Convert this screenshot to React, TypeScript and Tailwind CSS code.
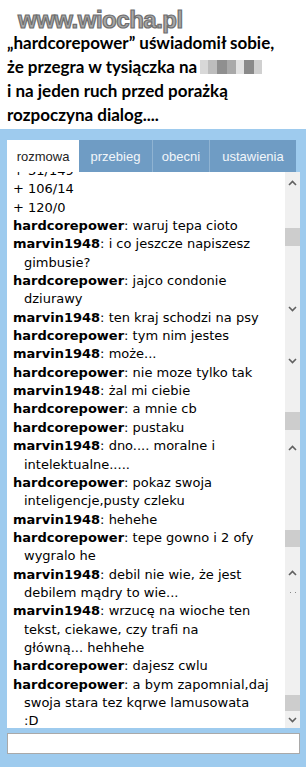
import React from 'react';

type Line = { who?: string; text: string; cont?: boolean };

const lines: Line[] = [
  { text: '+ 31/149' },
  { text: '+ 106/14' },
  { text: '+ 120/0' },
  { who: 'hardcorepower', text: 'waruj tepa cioto' },
  { who: 'marvin1948', text: 'i co jeszcze napiszesz' },
  { cont: true, text: 'gimbusie?' },
  { who: 'hardcorepower', text: 'jajco condonie' },
  { cont: true, text: 'dziurawy' },
  { who: 'marvin1948', text: 'ten kraj schodzi na psy' },
  { who: 'hardcorepower', text: 'tym nim jestes' },
  { who: 'marvin1948', text: 'może...' },
  { who: 'hardcorepower', text: 'nie moze tylko tak' },
  { who: 'marvin1948', text: 'żal mi ciebie' },
  { who: 'hardcorepower', text: 'a mnie cb' },
  { who: 'hardcorepower', text: 'pustaku' },
  { who: 'marvin1948', text: 'dno.... moralne i' },
  { cont: true, text: 'intelektualne.....' },
  { who: 'hardcorepower', text: 'pokaz swoja' },
  { cont: true, text: 'inteligencje,pusty czleku' },
  { who: 'marvin1948', text: 'hehehe' },
  { who: 'hardcorepower', text: 'tepe gowno i 2 ofy' },
  { cont: true, text: 'wygralo he' },
  { who: 'marvin1948', text: 'debil nie wie, że jest' },
  { cont: true, text: 'debilem mądry to wie...' },
  { who: 'marvin1948', text: 'wrzucę na wioche ten' },
  { cont: true, text: 'tekst, ciekawe, czy trafi na' },
  { cont: true, text: 'główną... hehhehe' },
  { who: 'hardcorepower', text: 'dajesz cwlu' },
  { who: 'hardcorepower', text: 'a bym zapomnial,daj' },
  { cont: true, text: 'swoja stara tez kqrwe lamusowata' },
  { cont: true, text: ':D' },
];

function Up() {
  return (
    <svg width="9" height="6" viewBox="0 0 9 6" className="mx-auto">
      <path d="M1 5 L4.5 1.5 L8 5" fill="none" stroke="#606060" strokeWidth="1.6" />
    </svg>
  );
}

function Down() {
  return (
    <svg width="9" height="6" viewBox="0 0 9 6" className="mx-auto">
      <path d="M1 1 L4.5 4.5 L8 1" fill="none" stroke="#606060" strokeWidth="1.6" />
    </svg>
  );
}

// stitched screenshot: the scrollbar repeats its pieces
const bar: { y: number; kind: 'up' | 'down' | 'thumb' | 'dots'; h?: number }[] = [
  { y: 180, kind: 'up' },
  { y: 228, kind: 'thumb', h: 18 },
  { y: 306, kind: 'down' },
  { y: 358, kind: 'down' },
  { y: 412, kind: 'thumb', h: 18 },
  { y: 445, kind: 'up' },
  { y: 530, kind: 'thumb', h: 17 },
  { y: 570, kind: 'up' },
  { y: 592, kind: 'dots' },
  { y: 695, kind: 'thumb', h: 16 },
  { y: 717, kind: 'down' },
];

export default function App() {
  const top = 172;
  return (
    <div className="w-[306px] h-[767px] bg-[#9ecbee] overflow-hidden">
      {/* caption */}
      <div className="bg-white h-[129px] pl-[7px] pt-[31px] relative">
        <div className="absolute left-[18px] top-[6px] font-['Liberation_Sans',sans-serif] font-bold text-[24px] leading-[28px] tracking-[-0.5px] text-[#a8a8a8] [-webkit-text-stroke:1.2px_#6e6e6e]">
          www.wiocha.pl
        </div>
        <div className="font-['Lato',sans-serif] font-bold text-[17px] leading-[24px] text-black">
          <div>„hardcorepower” uświadomił sobie,</div>
          <div className="flex items-center">
            <span>że przegra w tysiączka na</span>
            <span className="ml-[3px] flex h-[14px]">
              <span className="w-[8px] bg-[#d8d8d8]" />
              <span className="w-[9px] bg-[#bdbdbd]" />
              <span className="w-[10px] bg-[#8f8f8f]" />
              <span className="w-[9px] bg-[#a9a9a9]" />
              <span className="w-[8px] bg-[#e2e2e2]" />
              <span className="w-[10px] bg-[#8a8a8a]" />
              <span className="w-[8px] bg-[#d0d0d0]" />
            </span>
          </div>
          <div>i na jeden ruch przed porażką</div>
          <div>rozpoczyna dialog....</div>
        </div>
      </div>

      <div className="pt-[11px] pl-[7px] pr-[6px]">
        {/* tabs */}
        <div className="flex h-[32px] w-[289px] bg-[#6f9cc4] font-['Liberation_Sans',sans-serif] text-[13px]">
          <div className="w-[72px] bg-white text-[#222] flex items-center justify-center pt-[2px]">rozmowa</div>
          <div className="w-[74px] text-[#f2f6fa] flex items-center justify-center border-r border-[#8fb3d2] pt-[2px]">przebieg</div>
          <div className="w-[57px] text-[#f2f6fa] flex items-center justify-center border-r border-[#8fb3d2] pt-[2px]">obecni</div>
          <div className="flex-1 text-[#f2f6fa] flex items-center justify-center pt-[2px]">ustawienia</div>
        </div>

        {/* chat + scrollbar */}
        <div className="flex h-[556px]">
          <div className="w-[278px] bg-white overflow-hidden font-['DejaVu_Sans',sans-serif] text-[13px] leading-[18.35px] text-black pl-[6px]">
            <div className="-mt-[10px]">
              {lines.map((l, i) => (
                <div key={i} className={`whitespace-nowrap ${l.cont ? 'pl-[11px]' : ''}`}>
                  {l.who && <span className="font-bold">{l.who}</span>}
                  {l.who && ': '}
                  {l.text}
                </div>
              ))}
            </div>
          </div>
          <div className="w-[15px] bg-[#f0f0f0] relative">
            {bar.map((b, i) => (
              <div key={i} className="absolute left-0 right-0" style={{ top: b.y - top }}>
                {b.kind === 'up' && <Up />}
                {b.kind === 'down' && <Down />}
                {b.kind === 'thumb' && <div className="bg-[#cdcdcd]" style={{ height: b.h }} />}
                {b.kind === 'dots' && (
                  <div className="flex justify-center gap-[4px]">
                    <span className="w-[1px] h-[1px] bg-[#888]" />
                    <span className="w-[1px] h-[1px] bg-[#888]" />
                  </div>
                )}
              </div>
            ))}
          </div>
        </div>

        {/* input */}
        <div className="mt-[5px] h-[21px] w-[293px] bg-white border border-[#a9a9a9]" />
      </div>
    </div>
  );
}
